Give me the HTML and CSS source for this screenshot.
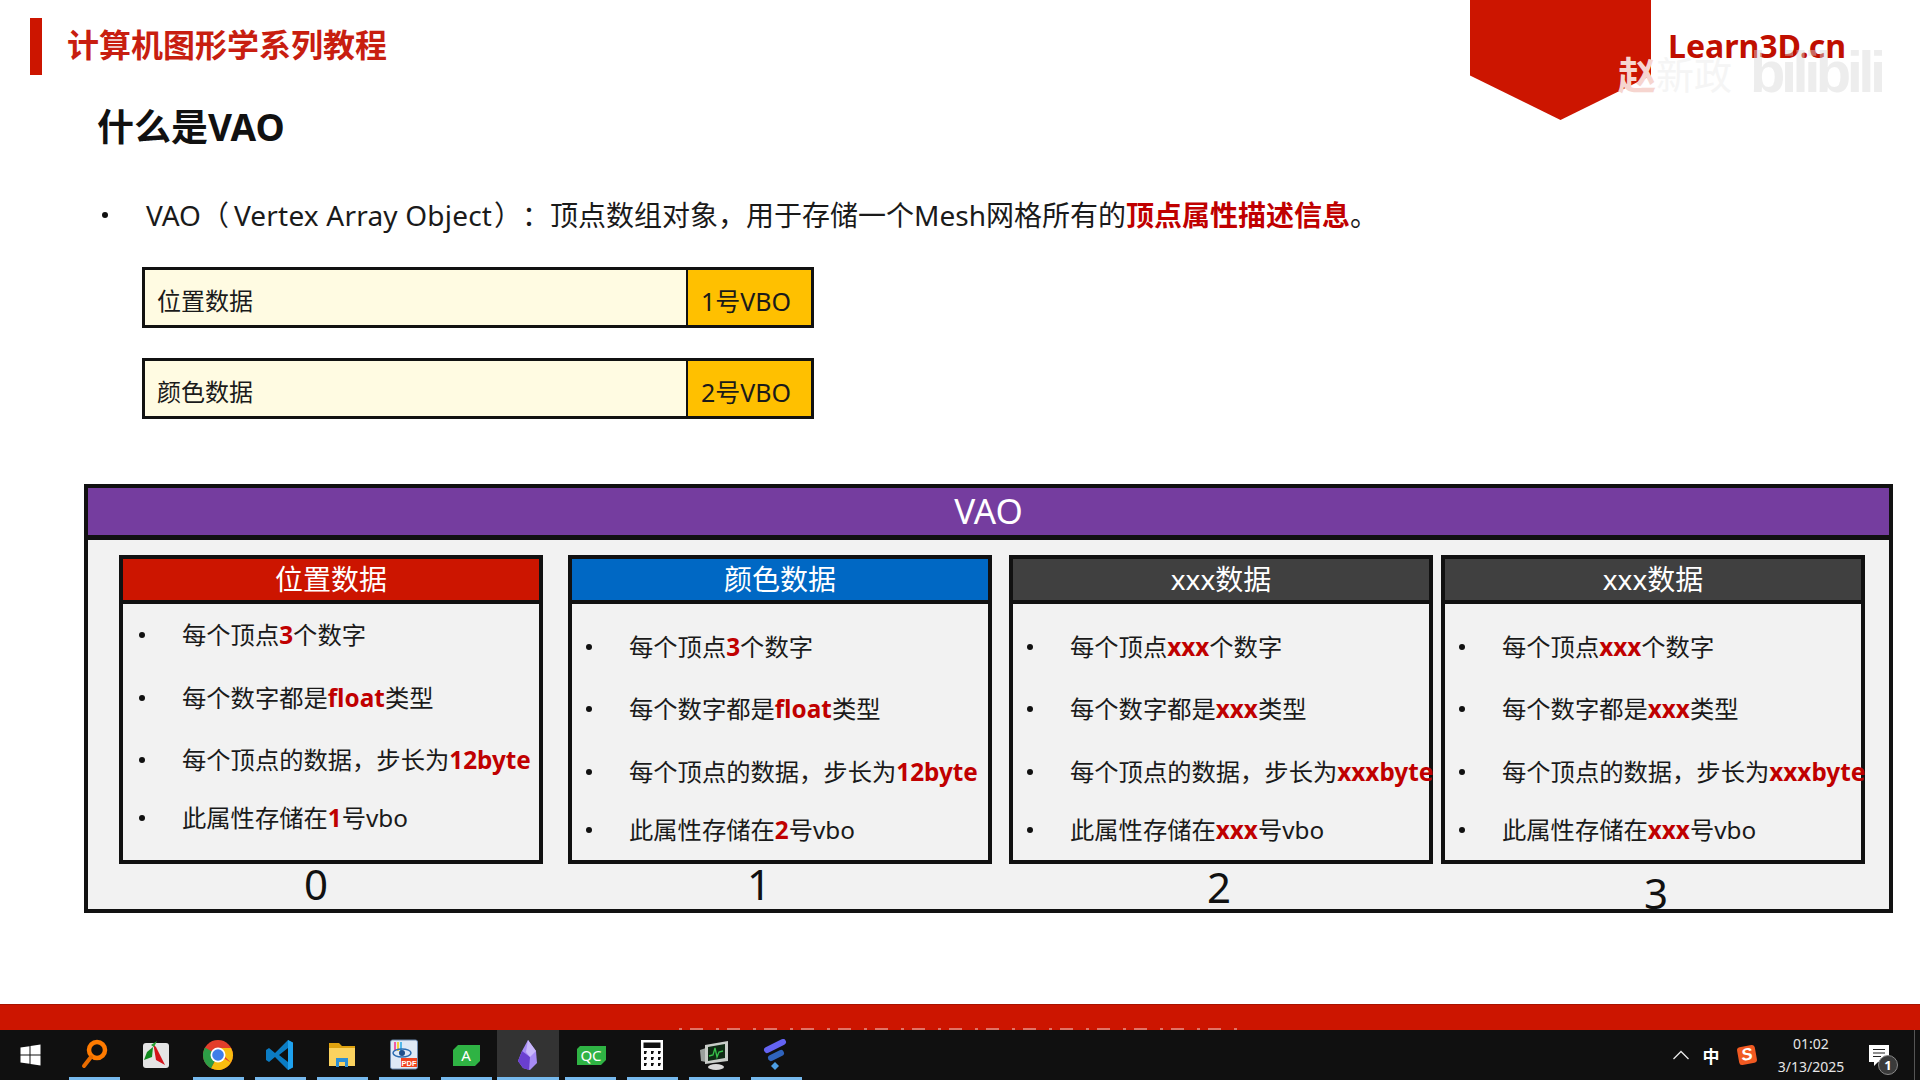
FILE: index.html
```html
<!DOCTYPE html>
<html lang="zh-CN">
<head>
    <meta charset="UTF-8">
    <title>什么是VAO</title>
    <link rel="stylesheet" href="styles.css">
</head>
<body>

    <div class="slide">
        <header class="top">
            <div class="top-mark"></div>
            <div class="top-title">计算机图形学系列教程</div>
            <div class="pentagon"></div>
            <div class="brand">Learn3D.cn</div>
        </header>

        <h1 class="heading">什么是VAO</h1>

        <div class="intro">
            <span class="intro-dot"></span>
            <p>VAO（<span class="intro-en">Vertex Array Object</span>）：顶点数组对象，用于存储一个Mesh网格所有的<b class="hot">顶点属性描述信息</b>。</p>
        </div>

        <div class="data-row">
            <div class="data-name">位置数据</div>
            <div class="data-vbo">1号VBO</div>
        </div>
        <div class="data-row data-row-2">
            <div class="data-name">颜色数据</div>
            <div class="data-vbo">2号VBO</div>
        </div>

        <section class="vao">
            <div class="vao-head">VAO</div>
            <div class="vao-body">
                <div class="col">
                    <div class="card">
                        <div class="card-head head-red">位置数据</div>
                        <ul class="card-list list-first">
                            <li>每个顶点<b class="hot">3</b>个数字</li>
                            <li>每个数字都是<b class="hot">float</b>类型</li>
                            <li>每个顶点的数据，步长为<b class="hot">12byte</b></li>
                            <li>此属性存储在<b class="hot">1</b>号vbo</li>
                        </ul>
                    </div>
                    <div class="index index-0">0</div>
                </div>
                <div class="col col-1">
                    <div class="card">
                        <div class="card-head head-blue">颜色数据</div>
                        <ul class="card-list">
                            <li>每个顶点<b class="hot">3</b>个数字</li>
                            <li>每个数字都是<b class="hot">float</b>类型</li>
                            <li>每个顶点的数据，步长为<b class="hot">12byte</b></li>
                            <li>此属性存储在<b class="hot">2</b>号vbo</li>
                        </ul>
                    </div>
                    <div class="index index-1">1</div>
                </div>
                <div class="col col-2">
                    <div class="card">
                        <div class="card-head head-dark">xxx数据</div>
                        <ul class="card-list">
                            <li>每个顶点<b class="hot">xxx</b>个数字</li>
                            <li>每个数字都是<b class="hot">xxx</b>类型</li>
                            <li>每个顶点的数据，步长为<b class="hot">xxxbyte</b></li>
                            <li>此属性存储在<b class="hot">xxx</b>号vbo</li>
                        </ul>
                    </div>
                    <div class="index index-2">2</div>
                </div>
                <div class="col col-3">
                    <div class="card">
                        <div class="card-head head-dark">xxx数据</div>
                        <ul class="card-list">
                            <li>每个顶点<b class="hot">xxx</b>个数字</li>
                            <li>每个数字都是<b class="hot">xxx</b>类型</li>
                            <li>每个顶点的数据，步长为<b class="hot">xxxbyte</b></li>
                            <li>此属性存储在<b class="hot">xxx</b>号vbo</li>
                        </ul>
                    </div>
                    <div class="index index-3">3</div>
                </div>
            </div>
        </section>

        <div class="strip"><div class="strip-cut"></div></div>

        <!-- video watermark -->
        <div class="mark-name"><span class="mark-first">赵</span>新政</div>
        <div class="mark-site">bilibili</div>
    </div>

    <footer class="taskbar">
        <div class="slot">
            <svg width="32" height="32" viewBox="1.500 0 32 32"><path fill="#fff" d="M6 8.600l9-1.300v8.200H6zM16 7.100l10-1.500v9.900H16zM6 16.500h9v8.200l-9-1.300zM16 16.500h10v9.900l-10-1.500z"/></svg>
        </div>
        <div class="slot on">
            <svg width="32" height="32" viewBox="0 0 32 32"><circle cx="19" cy="11" r="8" fill="none" stroke="#ff7b00" stroke-width="4.500"/><path d="M13 18L6 27" stroke="#e96c00" stroke-width="4" stroke-linecap="round"/></svg>
        </div>
        <div class="slot">
            <svg width="32" height="32" viewBox="0 0 32 32"><rect x="3" y="4" width="26" height="25" rx="3" fill="#e4e4e4"/><path d="M13 5l3 3 9 18-9-5-2-12z" fill="#d3131a"/><path d="M13 8l-1 10-8 3 3-8z" fill="#118a1d"/><path d="M11 6l6-4-3 6z" fill="#27a02f"/></svg>
        </div>
        <div class="slot on">
            <svg width="32" height="32" viewBox="0 0 32 32"><circle cx="16" cy="16" r="15" fill="#e33e2b"/><path d="M16 16L29 23.500A15 15 0 0 1 9 29.300z" fill="#f9bc0f"/><path d="M16 16L9 29.300A15 15 0 0 1 3 8.500z" fill="#2d9d46"/><path d="M16 9h13a15 15 0 0 1 0 14.500L21 16z" fill="#f9bc0f"/><circle cx="16" cy="16" r="7.500" fill="#fff"/><circle cx="16" cy="16" r="5.800" fill="#3f7de8"/></svg>
        </div>
        <div class="slot on">
            <svg width="32" height="32" viewBox="0 0 32 32"><path fill="#0b7cc4" d="M24 1L11 14 5 9 2 11v10l3 2 6-5 13 13 3-2V3z M24 9v14l-9-7z" fill-rule="evenodd"/><path fill="#1ea1ee" d="M24 1l5 2.500v25L24 31z"/></svg>
        </div>
        <div class="slot on">
            <svg width="32" height="32" viewBox="0 0 32 32"><path fill="#dfa20f" d="M3 4h10l3 3h13v6H3z"/><path fill="#fbd25f" d="M3 9h26v18H3z"/><path fill="#2d8fd5" d="M10 19h12v9h-3v-5h-6v5h-3z"/></svg>
        </div>
        <div class="slot on">
            <svg width="32" height="32" viewBox="0 0 32 32"><rect x="2.500" y="1" width="27" height="29" rx="2" fill="#dfe9f5" stroke="#6b88ad"/><path d="M6 3h2v9H6z" fill="#ef5aa8"/><path d="M9 3h2v9H9z" fill="#f2d13d"/><path d="M12 3h2v9h-2z" fill="#53b7e8"/><ellipse cx="14" cy="14" rx="9" ry="4" fill="none" stroke="#2b6cb0" stroke-width="1.500"/><circle cx="14" cy="14" r="3" fill="#20508c"/><rect x="13" y="19" width="16" height="9" fill="#f1431f"/><text class="pdf-text" x="21" y="26.500">PDF</text></svg>
        </div>
        <div class="slot on">
            <svg width="32" height="32" viewBox="0 0 32 32"><path fill="#2fb344" d="M8 6h22v16l-5 5H3V11z"/><text class="tile-text" x="16" y="22">A</text></svg>
        </div>
        <div class="slot on active">
            <svg width="32" height="32" viewBox="0 0 32 32"><path fill="#a78bf5" d="M16 1l8 11 1 12-7 7-7-2-5-7 4-10z"/><path fill="#6a3fd0" d="M10 12l8 6-1 13-6-2-5-7z"/><path fill="#c9b8fb" d="M16 1l-2 12 4 5 6-6z"/></svg>
        </div>
        <div class="slot on">
            <svg width="32" height="32" viewBox="0 0 32 32"><path fill="#2fb344" d="M6 7h26v14l-5 5H3V10z"/><text class="tile-text" x="17" y="22">QC</text></svg>
        </div>
        <div class="slot on">
            <svg width="32" height="32" viewBox="0 0 32 32"><rect x="5" y="1" width="22" height="30" fill="#fff"/><rect x="7.500" y="3.500" width="17" height="5.500" fill="#111"/><path fill="#111" d="M8 12h3l-1 3H8zM15 12h3l-1 3h-2zM22 12h3l-1 3h-2zM8 18h3l-1 3H8zM15 18h3l-1 3h-2zM22 18h3l-1 3h-2zM8 24h3l-1 3H8zM15 24h3l-1 3h-2zM22 24h3l-1 3h-2z"/></svg>
        </div>
        <div class="slot on">
            <svg width="32" height="32" viewBox="0 0 32 32"><path fill="#9aa09c" d="M2 11l6-2v14l-5-1z"/><path fill="#c8ccc8" d="M7 6l23-4v20L7 25z"/><path fill="#0f2a14" d="M10 8l17-3v14l-17 3z"/><path d="M11 17l4-1 2-7 2 9 2-5 4-1" fill="none" stroke="#37c24a" stroke-width="1.300"/><ellipse cx="18" cy="28" rx="8" ry="3" fill="#d8d8d8"/></svg>
        </div>
        <div class="slot on">
            <svg width="32" height="32" viewBox="0 0 32 32"><path d="M7 11L23 3" stroke="#6463f2" stroke-width="6" stroke-linecap="round"/><path d="M11 19l10-5" stroke="#2f63bd" stroke-width="6" stroke-linecap="round"/><path fill="#4d9fe6" d="M15 23l4 4-4 4-4-4z"/></svg>
        </div>

        <div class="tray">
            <svg class="tray-caret" width="16" height="10" viewBox="0 0 16 10"><path d="M0.500 9L8 1.500 15.500 9" fill="none" stroke="#e8e8e8" stroke-width="1.300"/></svg>
            <span class="tray-ime">中</span>
            <span class="tray-sogou">S</span>
            <div class="tray-clock">
                <span>01:02</span>
                <span>3/13/2025</span>
            </div>
            <div class="tray-note">
                <svg width="20" height="22" viewBox="0 0 20 22"><path fill="#fff" d="M0 0h20v17H9l-4 4v-4H0z"/><path stroke="#222" stroke-width="1.200" d="M4 4.500h12M4 8h12M4 11.500h8"/></svg>
                <span class="tray-badge">1</span>
            </div>
        </div>
    </footer>

</body>
</html>
```

FILE: styles.css
```css
* {
    margin: 0;
    padding: 0;
    box-sizing: border-box;
}

body {
    width: 1920px;
    height: 1080px;
    overflow: hidden;
    background: #fff;
    color: #1a1a1a;
    font-family: "Noto Sans", "Noto Sans CJK SC", sans-serif;
}

.hot {
    color: #c00000;
    font-weight: 700;
}

/* Slide */
.slide {
    position: relative;
    height: 1030px;
    display: flex;
    flex-direction: column;
    overflow: hidden;
}

.top {
    display: flex;
    align-items: flex-start;
    height: 75px;
    padding-left: 30px;
}

.top-mark {
    width: 12px;
    height: 57px;
    margin-top: 18px;
    background: #cc1500;
}

.top-title {
    width: 1116px;
    margin-left: 25px;
    padding-top: 21px;
    font-size: 32px;
    line-height: 48px;
    font-weight: 700;
    color: #c81e10;
    white-space: nowrap;
}

.pentagon {
    flex: none;
    width: 181px;
    height: 120px;
    margin-left: 287px;
    background: #cc1500;
    clip-path: polygon(0 0, 100% 0, 100% 63%, 50% 100%, 0 63%);
}

.brand {
    margin-left: 17px;
    padding-top: 24px;
    font-size: 32px;
    line-height: 44px;
    font-weight: 700;
    color: #c00f00;
    white-space: nowrap;
}

.heading {
    margin: 28px 0 0 97px;
    font-size: 37px;
    line-height: 48px;
    font-weight: 700;
    color: #111;
}

.intro {
    display: flex;
    align-items: center;
    margin: 44px 0 0 102px;
    font-size: 28px;
    line-height: 40px;
    white-space: nowrap;
    text-spacing-trim: space-all;
}

.intro-en {
    margin: 0 2px 0 5px;
    letter-spacing: 0.2px;
}

.intro-dot {
    width: 6px;
    height: 6px;
    margin-right: 38px;
    border-radius: 50%;
    background: #111;
}

.data-row {
    display: flex;
    width: 672px;
    height: 61px;
    margin: 32px 0 0 142px;
    border: 3px solid #111;
    font-size: 24px;
    background: #fffbe2;
}

.data-row-2 {
    margin-top: 30px;
}

.data-name {
    flex: 1;
    padding: 11px 0 0 12px;
    line-height: 40px;
}

.data-vbo {
    width: 125px;
    padding: 11px 0 0 13px;
    font-size: 25px;
    line-height: 40px;
    border-left: 2px solid #111;
    background: #ffc000;
}

/* VAO block */
.vao {
    width: 1809px;
    height: 429px;
    margin: 65px 0 0 84px;
    border: 4px solid #111;
    background: #f2f2f2;
}

.vao-head {
    height: 52px;
    border-bottom: 5px solid #111;
    background: #753d9f;
    color: #fff;
    font-size: 35px;
    line-height: 45px;
    text-align: center;
}

.vao-body {
    display: flex;
    height: 369px;
    padding: 15px 0 0 31px;
}

.col {
    width: 424px;
    flex: none;
}

.col-1 {
    margin-left: 25px;
}

.col-2 {
    margin-left: 17px;
}

.col-3 {
    margin-left: 8px;
}

.card {
    height: 309px;
    border: 4px solid #111;
}

.card-head {
    height: 45px;
    border-bottom: 4px solid #111;
    color: #fff;
    font-size: 28px;
    line-height: 41px;
    text-align: center;
}

.head-red {
    background: #cc1500;
}

.head-blue {
    background: #0068c4;
}

.head-dark {
    background: #404040;
}

.card-list {
    list-style: none;
    padding: 27px 0 0 14px;
    font-size: 24.3px;
    line-height: 32px;
    white-space: nowrap;
}

.list-first {
    padding: 15px 0 0 16px;
}

.card-list li {
    display: flex;
    align-items: center;
    margin-bottom: 30px;
}

.card-list li:nth-child(2) {
    margin-bottom: 31px;
}

.card-list li:nth-child(3) {
    margin-bottom: 26px;
}

.list-first li:nth-child(1) {
    margin-bottom: 31px;
}

.list-first li:nth-child(2) {
    margin-bottom: 30px;
}

.card-list li::before {
    content: "";
    flex: none;
    width: 6px;
    height: 6px;
    margin-right: 37px;
    border-radius: 50%;
    background: #111;
}

.index {
    font-size: 42px;
    line-height: 42px;
    color: #111;
}

.index-0 {
    margin-top: -1px;
    padding-left: 185px;
}

.index-1 {
    margin-top: -1px;
    padding-left: 179px;
}

.index-2 {
    margin-top: 2px;
    padding-left: 198px;
}

.index-3 {
    margin-top: 8px;
    padding-left: 203px;
}

/* Red strip at the slide bottom, the next line of text is cut off by the taskbar */
.strip {
    display: flex;
    justify-content: center;
    align-items: flex-end;
    height: 26px;
    margin-top: auto;
    border-top: 1px solid #a81200;
    background: #cc1500;
}

.strip-cut {
    width: 563px;
    height: 2px;
    opacity: 0.4;
    background: repeating-linear-gradient(90deg, #fff 0 3px, transparent 3px 11px, #fff 11px 24px, transparent 24px 37px);
}

.mark-name {
    position: absolute;
    top: 52px;
    left: 1618px;
    font-size: 38px;
    line-height: 44px;
    color: #f5f5f5;
    white-space: nowrap;
}

.mark-first {
    color: #f6d5cf;
    font-weight: 700;
}

.mark-site {
    position: absolute;
    top: 38px;
    left: 1750px;
    font-family: "Liberation Sans", sans-serif;
    font-size: 58px;
    line-height: 68px;
    font-weight: 700;
    letter-spacing: -4.5px;
    color: rgba(215, 215, 215, 0.45);
}

/* Taskbar */
.taskbar {
    display: flex;
    height: 50px;
    padding-left: 1px;
    background: #101010;
}

.slot {
    position: relative;
    display: flex;
    align-items: center;
    justify-content: center;
    width: 62px;
    height: 50px;
}

.slot.on::after {
    content: "";
    position: absolute;
    left: 6px;
    right: 5px;
    bottom: 0;
    height: 3px;
    background: #76b9ed;
}

.slot.active {
    background: #333;
}

.slot.active::after {
    left: 0;
    right: 0;
}

.pdf-text {
    font-family: "Liberation Sans", sans-serif;
    font-size: 7.5px;
    font-weight: 700;
    fill: #fff;
    text-anchor: middle;
}

.tile-text {
    font-family: "Noto Sans", sans-serif;
    font-size: 15px;
    fill: #fff;
    text-anchor: middle;
}

.tray {
    display: flex;
    align-items: center;
    margin-left: auto;
    margin-right: 5px;
    padding-right: 16px;
    border-right: 1px solid #555;
    color: #e6e6e6;
}

.tray-caret {
    margin-right: 12px;
}

.tray-ime {
    width: 20px;
    margin-right: 17px;
    color: #fff;
    font-size: 17px;
    font-weight: 700;
    text-align: center;
}

.tray-sogou {
    width: 18px;
    height: 18px;
    border-radius: 3px;
    background: #f15a22;
    color: #fff;
    font-family: "Liberation Sans", sans-serif;
    font-size: 17px;
    line-height: 18px;
    font-weight: 700;
    font-style: italic;
    text-align: center;
    transform: rotate(-10deg);
}

.tray-clock {
    display: flex;
    flex-direction: column;
    align-items: center;
    width: 80px;
    margin-left: 15px;
    font-size: 14px;
    line-height: 23px;
}

.tray-note {
    position: relative;
    width: 47px;
    height: 50px;
    padding: 15px 0 0 18px;
}

.tray-badge {
    position: absolute;
    top: 25px;
    left: 27px;
    width: 20px;
    height: 20px;
    border: 1px solid #888;
    border-radius: 50%;
    background: #3a3a3a;
    color: #fff;
    font-size: 13px;
    line-height: 18px;
    font-weight: 700;
    text-align: center;
}
```
